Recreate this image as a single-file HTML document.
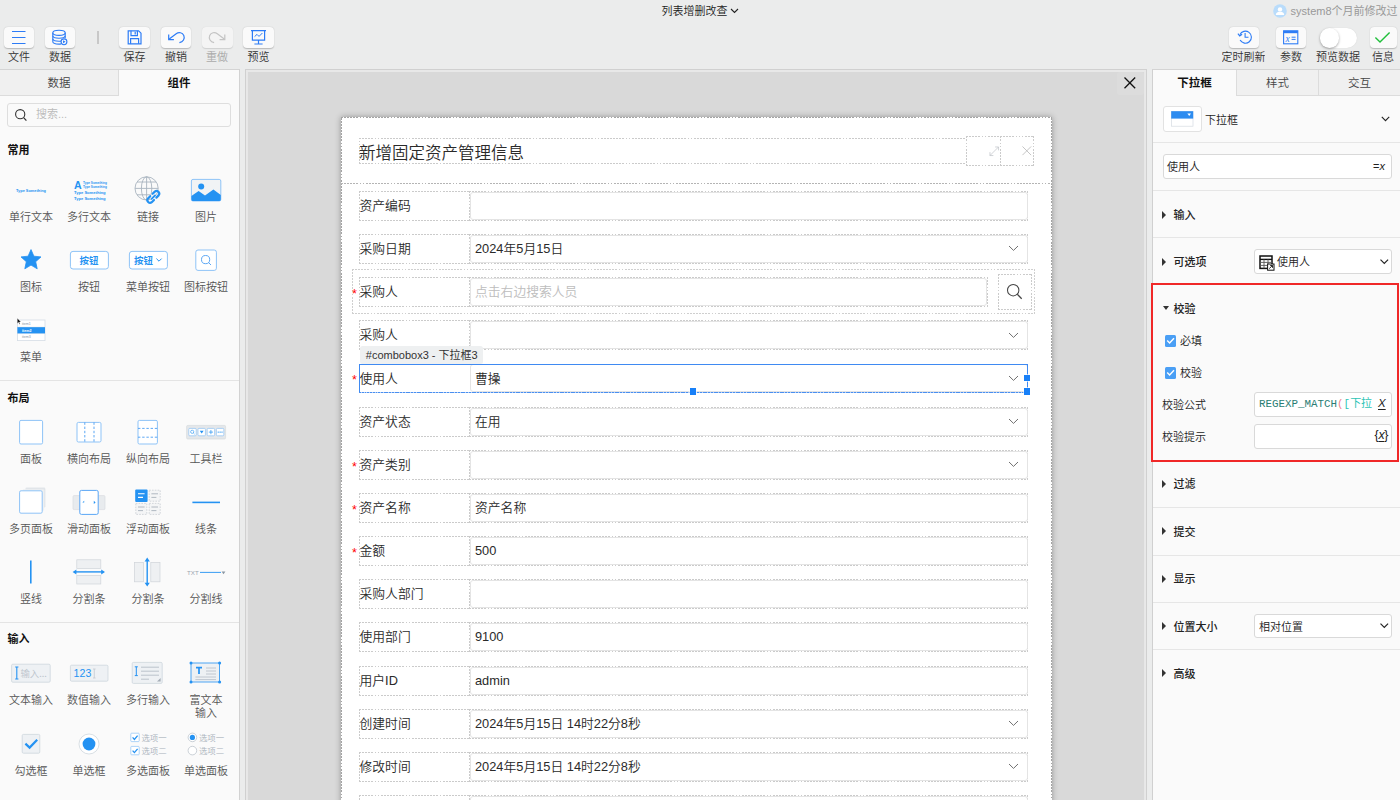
<!DOCTYPE html>
<html lang="zh-CN">
<head>
<meta charset="utf-8">
<title>列表增删改查</title>
<style>
*{box-sizing:border-box;margin:0;padding:0}
html,body{width:1400px;height:800px;overflow:hidden}
body{position:relative;background:#ebecec;font-family:"Liberation Sans","Noto Sans CJK SC",sans-serif;font-size:11px;color:#333;line-height:1;font-weight:350}
.abs{position:absolute}
svg{display:block;overflow:visible}
/* ---------- top bar ---------- */
#title{position:absolute;left:0;width:1400px;top:4px;height:14px;text-align:center;font-size:11px;line-height:14px;color:#222}
#title svg{display:inline-block;vertical-align:middle;margin-left:2px;margin-top:-2px}
.tb{position:absolute;top:26.6px;width:30.5px;height:21.6px;background:#fafafa;border-radius:4px;box-shadow:0 0.4px 1.2px rgba(0,0,0,.22)}
.tb svg{position:absolute;left:-0.5px;top:-1px}
.tl{position:absolute;top:50px;height:14px;line-height:14px;font-size:11px;color:#333;text-align:center;white-space:nowrap;width:60px;margin-left:-30px}
.tl.dis{color:#aaa}
#user{position:absolute;top:4px;left:1290.6px;font-size:11px;line-height:14px;color:#999;white-space:nowrap;font-weight:400}
/* ---------- left panel ---------- */
#left{position:absolute;left:0;top:69.2px;width:240px;height:731px;background:#fafafa;border-top:0.9px solid #d4d4d4;border-right:0.9px solid #d2d2d2}
.tab{position:absolute;top:0;height:26px;line-height:27px;text-align:center;font-size:11.5px;color:#444}
.tab.off{background:#f0f0f0;border-bottom:1px solid #dcdcdc;border-right:1px solid #dcdcdc}
.tab.on{font-weight:bold;color:#111}
#search{position:absolute;left:7px;top:33.2px;width:224px;height:23.6px;border:1.2px solid #dedede;border-radius:3px;background:#fafafa}
#search span{position:absolute;left:28px;top:0;line-height:21px;color:#bbb;font-size:11px}
.sec{position:absolute;left:7.4px;font-weight:bold;font-size:11px;color:#111;line-height:14px}
.hr{position:absolute;left:0;height:1px;background:#e4e4e4}
.it{position:absolute;width:58px;height:70px;margin-left:-29px}
.it svg{position:absolute;left:9px;top:0}
.it span{position:absolute;left:-6px;width:70px;top:41px;text-align:center;font-size:11px;line-height:13px;color:#555;white-space:nowrap}
/* ---------- canvas ---------- */
#cv{position:absolute;left:244.7px;top:69.2px;width:902.3px;height:735px;background:#d9d9d9;border:0.9px solid #d0d0d0;box-shadow:inset 0 0 0 1.9px #e8e8e8}
#dlg{position:absolute;left:340.7px;top:117.3px;width:711.6px;height:700px;background-color:#fff;box-shadow:0 0 6px rgba(0,0,0,.32);--dc:#a4a4a4}
.db,.lab,.fld{--dc:#cbcbcb}
.db,.lab,.fld,#dlg{background-image:repeating-linear-gradient(90deg,var(--dc) 0 1.8px,transparent 1.8px 3.1px),repeating-linear-gradient(90deg,var(--dc) 0 1.8px,transparent 1.8px 3.1px),repeating-linear-gradient(0deg,var(--dc) 0 1.8px,transparent 1.8px 3.1px),repeating-linear-gradient(0deg,var(--dc) 0 1.8px,transparent 1.8px 3.1px);background-size:100% 1px,100% 1px,1px 100%,1px 100%;background-position:0 0,0 100%,0 0,100% 0;background-repeat:no-repeat}
.db{position:absolute}
.lab{position:absolute;left:359px;width:111px;height:30px;font-size:12.8px;line-height:30px;color:#2a2a2a;white-space:nowrap;padding-left:0.5px}
.fld{position:absolute;left:469px;width:559px;height:30px;font-size:12.8px;line-height:30px;color:#2a2a2a;padding-left:6px;white-space:nowrap;background-color:#fff}
.fld::before{content:"";position:absolute;left:0.5px;top:1px;right:0.5px;bottom:1px;border:1px solid #e4e4e4;border-radius:3px}
.fld svg{position:absolute;right:9px;top:11.4px}
.req{position:absolute;left:352px;color:#f00;font-size:12.5px;line-height:12px;font-family:'Liberation Sans',sans-serif}
/* ---------- right panel ---------- */
#right{position:absolute;left:1152px;top:69.2px;width:248px;height:731px;background:#fafafa;border-top:0.9px solid #d4d4d4;border-left:0.9px solid #d0d0d0}
.rs{position:absolute;left:1173.6px;font-size:11px;line-height:14px;color:#222;font-weight:500;white-space:nowrap}
.rl{position:absolute;left:1162px;font-size:11px;line-height:14px;color:#222;white-space:nowrap}
.tri{position:absolute;left:1162.3px;width:0;height:0;border-left:4.6px solid #333;border-top:4.2px solid transparent;border-bottom:4.2px solid transparent}
.rin{position:absolute;left:1254px;width:138px;height:25px;border:1px solid #d9d9d9;border-radius:3px;background:#fff;font-size:11px;line-height:25.2px;color:#222;white-space:nowrap;overflow:hidden}
.rhr{position:absolute;left:1153px;width:247px;height:1px;background:#e6e6e6}
.cb{position:absolute;left:1164.7px;width:11.5px;height:11.5px;background:#4a9ff5;border-radius:1.5px}
</style>
</head>
<body>
<div id="title">列表增删改查<svg width="9" height="6" viewBox="0 0 9 6"><path d="M1 1 L4.5 4.5 L8 1" fill="none" stroke="#222" stroke-width="1.1"/></svg></div>
<div id="user">system8个月前修改过</div>
<svg class="abs" style="left:1273px;top:4px" width="14" height="14" viewBox="0 0 14 14"><circle cx="7" cy="7" r="6.8" fill="#b9dcfb"/><circle cx="7" cy="5.4" r="2.2" fill="#fff"/><path d="M2.8 11 Q3 7.8 7 7.8 Q11 7.8 11.2 11 Z" fill="#fff"/></svg>

<!-- left toolbar buttons -->
<div class="tb" style="left:3.5px"><svg width="31" height="23" viewBox="0 0 31 23"><path d="M9 5.5H22.5M9 11.5H22.5M9 17.5H22.5" stroke="#2d7cf6" stroke-width="1.2" fill="none"/></svg></div>
<div class="tl" style="left:19px">文件</div>
<div class="tb" style="left:44.5px"><svg width="31" height="23" viewBox="0 0 31 23"><g fill="none" stroke="#2d7cf6" stroke-width="1.1"><ellipse cx="15" cy="6.8" rx="6.2" ry="2.6"/><path d="M8.8 6.8V15.5C8.8 17 11.5 18.1 15 18.1 15.8 18.1 16.5 18 17.2 17.9M21.2 6.8V12.3"/><path d="M8.8 9.8C8.8 11.2 11.5 12.3 15 12.3 18.5 12.3 21.2 11.2 21.2 9.8M8.8 12.8C8.8 14.2 11.5 15.3 15 15.3 15.8 15.3 16.4 15.2 17 15.1"/><circle cx="20" cy="15.8" r="2.9" fill="#fafafa"/></g><path d="M19 14.3 L21.6 15.8 L19 17.3Z" fill="#2d7cf6"/></svg></div>
<div class="tl" style="left:60px">数据</div>
<div class="abs" style="left:97px;top:31px;width:1.5px;height:13px;background:#c8c8c8"></div>
<div class="tb" style="left:119px"><svg width="31" height="23" viewBox="0 0 31 23"><g fill="none" stroke="#2d7cf6" stroke-width="1.2"><path d="M9.2 4.8H19.6L22 7.2V17.8H9.2Z"/><path d="M12 4.8V9.6H18.4V4.8M16.2 5.8V8.4M11.6 17.8V12.6H19.6V17.8"/></g></svg></div>
<div class="tl" style="left:134.5px">保存</div>
<div class="tb" style="left:160.5px"><svg width="31" height="23" viewBox="0 0 31 23"><g fill="none" stroke="#2d7cf6" stroke-width="1.2"><path d="M8.9 13.3 L16.2 7.7 C18.8 5.8 22.4 6.5 23.8 9.5 C25.1 12.5 23.2 16 19.4 16.7"/><path d="M8.7 8.6 V13.6 H13.9"/></g></svg></div>
<div class="tl" style="left:176px">撤销</div>
<div class="tb" style="left:202px;background:#f4f4f4;box-shadow:0 0.5px 1px rgba(0,0,0,.12)"><svg width="31" height="23" viewBox="0 0 31 23"><g fill="none" stroke="#c4c4c4" stroke-width="1.2"><path d="M22.6 13.3 L15.3 7.7 C12.7 5.8 9.1 6.5 7.7 9.5 C6.4 12.5 8.3 16 12.1 16.7"/><path d="M22.8 8.6 V13.6 H17.6"/></g></svg></div>
<div class="tl dis" style="left:217px">重做</div>
<div class="tb" style="left:243px"><svg width="31" height="23" viewBox="0 0 31 23"><g fill="none" stroke="#2d7cf6" stroke-width="1.2"><path d="M8 4.6H23M9.4 4.6V14.2H21.6V4.6M15.5 14.2V17.6M11.4 18H19.6"/><path d="M11.6 10.6 L14 8.4 L16 10.4 L19.4 7" stroke-width="1"/></g></svg></div>
<div class="tl" style="left:258.5px">预览</div>

<!-- right toolbar buttons -->
<div class="tb" style="left:1228.5px"><svg width="31" height="23" viewBox="0 0 31 23"><g fill="none" stroke="#2d7cf6" stroke-width="1.1" transform="translate(1.5,-0.6)"><path d="M10.4 9.4A6 6 0 1 1 10.6 14.6"/><path d="M8.4 8.2 L10.2 10.6 L12.6 8.8"/><path d="M15.6 7.6V11.8H19"/></g></svg></div>
<div class="tl" style="left:1222.4px;width:43px;margin-left:0;overflow:hidden;display:flex;justify-content:flex-end">定时刷新</div>
<div class="tb" style="left:1275.5px"><svg width="31" height="23" viewBox="0 0 31 23"><rect x="8.6" y="4.8" width="14.2" height="13" fill="none" stroke="#2d7cf6" stroke-width="1.1"/><rect x="8.6" y="4.8" width="14.2" height="2.4" fill="#2d7cf6"/><text x="10.4" y="15.6" font-family="Liberation Serif,serif" font-style="italic" font-size="9.5" fill="#2d7cf6">x</text><path d="M16.6 11.2H20.6M16.6 13.4H20.6" stroke="#2d7cf6" stroke-width="1"/></svg></div>
<div class="tl" style="left:1291px">参数</div>
<div class="abs" style="left:1319.5px;top:28px;width:37.2px;height:19.5px;border-radius:10px;background:#fff;box-shadow:0 0 1px rgba(0,0,0,.15)"></div>
<div class="abs" style="left:1319.5px;top:28px;width:19.5px;height:19.5px;border-radius:10px;background:#fff;box-shadow:0 1px 2.5px rgba(0,0,0,.35)"></div>
<div class="tl" style="left:1338px">预览数据</div>
<div class="tb" style="left:1369.5px;width:27px"><svg width="27" height="23" viewBox="0 0 27 23"><path d="M6.4 11.6 L11 16 L20.6 6.4" fill="none" stroke="#1fbf3a" stroke-width="1.4"/></svg></div>
<div class="tl" style="left:1383px">信息</div>

<div id="left">
 <div class="tab off" style="left:0;width:119px">数据</div>
 <div class="tab on" style="left:119px;width:120px">组件</div>
 <div id="search"><svg class="abs" style="left:6px;top:4px" width="14" height="14" viewBox="0 0 14 14"><circle cx="6.2" cy="6.2" r="4.6" fill="none" stroke="#333" stroke-width="1.1"/><path d="M9.6 9.6 L12.4 12.6" stroke="#333" stroke-width="1.2"/></svg><span>搜索...</span></div>
</div>
<div class="sec" style="top:143px">常用</div>
<div class="hr" style="top:380px;width:239px"></div>
<div class="sec" style="top:391px">布局</div>
<div class="hr" style="top:621.8px;width:239px"></div>
<div class="sec" style="top:632px">输入</div>

<!-- ===== 常用 row1 (icon box top = 170, 40x40, centre y=190) ===== -->
<div class="it" style="left:31px;top:170px"><svg width="40" height="40" viewBox="0 0 40 40"><text x="20" y="21.5" text-anchor="middle" font-family="Liberation Sans,sans-serif" font-weight="bold" font-size="3.9" fill="#2492f2">Type Something</text></svg><span>单行文本</span></div>
<div class="it" style="left:89px;top:170px"><svg width="40" height="40" viewBox="0 0 40 40"><g font-family="Liberation Sans,sans-serif" font-weight="bold" fill="#2492f2"><text x="5" y="18.6" font-size="10.6">A</text><text x="14" y="13.5" font-size="3.1">Type Something</text><text x="14" y="17.8" font-size="3.1">Type Something</text><text x="5" y="24.2" font-size="4.1">Type Something</text><text x="5" y="30.4" font-size="4.1">Type Something</text></g></svg><span>多行文本</span></div>
<div class="it" style="left:148px;top:170px"><svg width="40" height="40" viewBox="0 0 40 40"><g fill="none" stroke="#a9b4bf" stroke-width="0.9"><circle cx="18.6" cy="18.4" r="11.6"/><ellipse cx="18.6" cy="18.4" rx="5.2" ry="11.6"/><path d="M18.6 6.8V30M7 18.4H30.2M9 12H28.2M9 24.8H22"/></g><g fill="none" stroke="#2492f2" stroke-width="2.2" stroke-linecap="round" transform="translate(-1.8,-0.4)"><path d="M26.4 24.2 L28.6 22 A2.7 2.7 0 0 1 32.4 25.8 L30.2 28"/><path d="M27.8 30.4 L25.6 32.6 A2.7 2.7 0 0 1 21.8 28.8 L24 26.6"/><path d="M25.4 29.2 L28.8 25.8" stroke-width="1.8"/></g></svg><span>链接</span></div>
<div class="it" style="left:206px;top:170px"><svg width="40" height="40" viewBox="0 0 40 40"><rect x="5.4" y="9.4" width="29.4" height="21.6" rx="1.6" fill="#f1f3f5" stroke="#8ec3f7" stroke-width="1"/><circle cx="15.2" cy="16.4" r="3" fill="#2492f2"/><path d="M5.4 26 L12.6 21 L19 25.4 L27.4 19.6 L34.8 25 V29.4 Q34.8 31 33.2 31 H7 Q5.4 31 5.4 29.4Z" fill="#2492f2"/></svg><span>图片</span></div>
<!-- ===== 常用 row2 (top 240) ===== -->
<div class="it" style="left:31px;top:240px"><svg width="40" height="40" viewBox="0 0 40 40"><path d="M20 9.6 L22.9 16.2 L30 16.9 L24.7 21.7 L26.2 28.8 L20 25.1 L13.8 28.8 L15.3 21.7 L10 16.9 L17.1 16.2Z" fill="#2492f2" stroke="#2492f2" stroke-width="0.8" stroke-linejoin="round"/></svg><span>图标</span></div>
<div class="it" style="left:89px;top:240px"><svg width="40" height="40" viewBox="0 0 40 40"><rect x="1.4" y="11.4" width="38" height="17.6" rx="2.6" fill="#fff" stroke="#8ec3f7" stroke-width="1"/><text x="20" y="23.6" text-anchor="middle" font-family="Noto Sans CJK SC,sans-serif" font-weight="bold" font-size="9.4" fill="#2492f2">按钮</text></svg><span>按钮</span></div>
<div class="it" style="left:148px;top:240px"><svg width="40" height="40" viewBox="0 0 40 40"><rect x="1.4" y="11.4" width="38" height="17.6" rx="2.6" fill="#fff" stroke="#8ec3f7" stroke-width="1"/><text x="15.4" y="23.6" text-anchor="middle" font-family="Noto Sans CJK SC,sans-serif" font-weight="bold" font-size="9.4" fill="#2492f2">按钮</text><path d="M28.4 18.6 L31 21.2 L33.6 18.6" fill="none" stroke="#2492f2" stroke-width="1"/></svg><span>菜单按钮</span></div>
<div class="it" style="left:206px;top:240px"><svg width="40" height="40" viewBox="0 0 40 40"><rect x="9.8" y="10" width="20.6" height="20.4" rx="2.2" fill="#fff" stroke="#8ec3f7" stroke-width="1"/><circle cx="19.6" cy="19.6" r="4.1" fill="none" stroke="#4a9df3" stroke-width="0.9"/><path d="M22.6 22.6 L25 25" stroke="#4a9df3" stroke-width="0.9"/></svg><span>图标按钮</span></div>
<!-- ===== 常用 row3 (top 310) ===== -->
<div class="it" style="left:31px;top:310px"><svg width="40" height="40" viewBox="0 0 40 40"><rect x="6.4" y="10" width="27.6" height="20.6" fill="#fff" stroke="#d5dde5" stroke-width="0.8"/><rect x="6.4" y="17" width="27.6" height="6.6" fill="#2492f2"/><path d="M6.4 17H34M6.4 23.6H34" stroke="#d5dde5" stroke-width="0.4"/><g font-family="Liberation Sans,sans-serif" font-size="3.6"><text x="11" y="14.8" fill="#8b97a3">item1</text><text x="11" y="21.6" fill="#fff" font-weight="bold">item2</text><text x="11" y="28.4" fill="#8b97a3">item3</text></g></svg><span>菜单</span></div>
<!-- mouse cursor -->
<svg class="abs" style="left:16.6px;top:317.6px" width="5" height="6.9" viewBox="0 0 8 11"><path d="M0.5 0.5 V8.6 L2.5 6.8 L3.9 10 L5 9.5 L3.7 6.4 L6.3 6.2Z" fill="#111" stroke="#fff" stroke-width="0.5"/></svg>
<!-- ===== 布局 row1 (top 412, centre 432) ===== -->
<div class="it" style="left:31px;top:412px"><svg width="40" height="40" viewBox="0 0 40 40"><rect x="8.6" y="8.4" width="23" height="23.6" rx="1.4" fill="#fff" stroke="#8ec3f7" stroke-width="1"/></svg><span>面板</span></div>
<div class="it" style="left:89px;top:412px"><svg width="40" height="40" viewBox="0 0 40 40"><rect x="8" y="10.4" width="24" height="19.6" rx="1.4" fill="#fff" stroke="#8ec3f7" stroke-width="1"/><path d="M15.8 10.4V30M25 10.4V30" stroke="#4a9df3" stroke-width="0.9" stroke-dasharray="2.4 1.8" fill="none"/></svg><span>横向布局</span></div>
<div class="it" style="left:148px;top:412px"><svg width="40" height="40" viewBox="0 0 40 40"><rect x="10" y="8.4" width="19.4" height="23.6" rx="1.4" fill="#fff" stroke="#8ec3f7" stroke-width="1"/><path d="M10 16.4H29.4M10 25.2H29.4" stroke="#4a9df3" stroke-width="0.9" stroke-dasharray="2.4 1.8" fill="none"/></svg><span>纵向布局</span></div>
<div class="it" style="left:206px;top:412px"><svg width="40" height="40" viewBox="0 0 40 40"><rect x="0.6" y="13.4" width="39" height="13.6" rx="1.2" fill="#e4e7ea" stroke="#d2d6da" stroke-width="0.6"/><g fill="#fff" stroke="#8ec3f7" stroke-width="0.7"><rect x="2.8" y="16.4" width="7.4" height="7.4" rx="1"/><rect x="12" y="16.4" width="7.4" height="7.4" rx="1"/><rect x="21.2" y="16.4" width="7.4" height="7.4" rx="1"/><rect x="30.4" y="16.4" width="7.4" height="7.4" rx="1"/></g><circle cx="6.2" cy="19.8" r="1.6" fill="none" stroke="#2492f2" stroke-width="0.6"/><path d="M7.4 21 L8.6 22.2" stroke="#2492f2" stroke-width="0.6"/><path d="M13.8 18.8H17.6L15.7 21.6Z" fill="#2492f2"/><path d="M22.8 20.1H27M24.9 18V22.2" stroke="#2492f2" stroke-width="0.7"/><g fill="#2492f2"><circle cx="32.2" cy="20.1" r="0.7"/><circle cx="34.1" cy="20.1" r="0.7"/><circle cx="36" cy="20.1" r="0.7"/></g></svg><span>工具栏</span></div>
<!-- ===== 布局 row2 (top 482) ===== -->
<div class="it" style="left:31px;top:482px"><svg width="40" height="40" viewBox="0 0 40 40"><rect x="14.4" y="5.6" width="20" height="20" rx="1.4" fill="#e1e5e9"/><rect x="11.6" y="7.2" width="21.6" height="21.6" rx="1.4" fill="#edf0f2"/><rect x="8.6" y="8.8" width="22.6" height="22.4" rx="1.4" fill="#fff" stroke="#8ec3f7" stroke-width="1"/></svg><span>多页面板</span></div>
<div class="it" style="left:89px;top:482px"><svg width="40" height="40" viewBox="0 0 40 40"><rect x="4" y="13.6" width="32" height="14" rx="1" fill="#e8ebee" stroke="#d5d9dd" stroke-width="0.6"/><rect x="10.8" y="8.4" width="18.4" height="24" rx="1.6" fill="#fff" stroke="#5aa6f5" stroke-width="1"/><path d="M15.2 20.4 L13.4 20.4 L15.2 18.8 V22Z M24.8 18.8 L26.6 20.4 L24.8 22Z" fill="#2492f2"/></svg><span>滑动面板</span></div>
<div class="it" style="left:148px;top:482px"><svg width="40" height="40" viewBox="0 0 40 40"><g fill="#f4f5f6" stroke="#b9c0c7" stroke-width="0.6" stroke-dasharray="1.6 1.2"><rect x="21.2" y="8.2" width="11" height="11"/><rect x="7.8" y="21.4" width="11" height="11"/><rect x="21.2" y="21.4" width="11" height="11"/></g><rect x="7.2" y="7.6" width="12.4" height="12.4" rx="1" fill="#2492f2"/><path d="M10 11.8H16.6M10 15.4H15" stroke="#fff" stroke-width="1.1"/><path d="M23.4 11.8H30M23.4 15.4H28.4M10 25H16.6M10 28.6H15M23.4 25H30M23.4 28.6H28.4" stroke="#a9b2bb" stroke-width="0.9"/></svg><span>浮动面板</span></div>
<div class="it" style="left:206px;top:482px"><svg width="40" height="40" viewBox="0 0 40 40"><path d="M6.4 20.4H34" stroke="#2492f2" stroke-width="1.6"/></svg><span>线条</span></div>
<!-- ===== 布局 row3 (top 552) ===== -->
<div class="it" style="left:31px;top:552px"><svg width="40" height="40" viewBox="0 0 40 40"><path d="M19.8 8.6V31.4" stroke="#2492f2" stroke-width="1.6"/></svg><span>竖线</span></div>
<div class="it" style="left:89px;top:552px"><svg width="40" height="40" viewBox="0 0 40 40"><rect x="7.8" y="7.8" width="24" height="8.6" fill="#eef0f2" stroke="#cfd4d9" stroke-width="0.7"/><rect x="7.8" y="23.4" width="24" height="8.6" fill="#eef0f2" stroke="#cfd4d9" stroke-width="0.7"/><path d="M5.4 19.9H34.2" stroke="#2492f2" stroke-width="1.4"/><path d="M3.6 19.9 L7.4 17.4 V22.4Z M36 19.9 L32.2 17.4 V22.4Z" fill="#2492f2"/></svg><span>分割条</span></div>
<div class="it" style="left:148px;top:552px"><svg width="40" height="40" viewBox="0 0 40 40"><rect x="6.4" y="10.4" width="9.2" height="19.4" fill="#eef0f2" stroke="#cfd4d9" stroke-width="0.7"/><rect x="22.8" y="10.4" width="9.2" height="19.4" fill="#eef0f2" stroke="#cfd4d9" stroke-width="0.7"/><path d="M19.2 7.6V32.6" stroke="#2492f2" stroke-width="1.4"/><path d="M19.2 5.6 L21.8 9.4 H16.6Z M19.2 34.6 L21.8 30.8 H16.6Z" fill="#2492f2"/></svg><span>分割条</span></div>
<div class="it" style="left:206px;top:552px"><svg width="40" height="40" viewBox="0 0 40 40"><text x="1" y="22.6" font-family="Liberation Sans,sans-serif" font-size="6.2" fill="#9aa5b0">TXT</text><path d="M14 20.4H35" stroke="#2492f2" stroke-width="0.9"/><path d="M35.6 19.4H39.4L37.5 22.2Z" fill="#8a96a2"/></svg><span>分割线</span></div>
<!-- ===== 输入 row1 (top 653, centre 673) ===== -->
<div class="it" style="left:31px;top:653px"><svg width="40" height="40" viewBox="0 0 40 40"><rect x="0.6" y="11.2" width="38.6" height="18" rx="1.2" fill="#eef1f4" stroke="#c9d2da" stroke-width="0.7"/><path d="M4.2 14H7.4M4.2 26H7.4M5.8 14V26" stroke="#2492f2" stroke-width="1.1"/><text x="9.4" y="24.4" font-family="Noto Sans CJK SC,sans-serif" font-size="9.4" fill="#bcc4cc">输入...</text></svg><span>文本输入</span></div>
<div class="it" style="left:89px;top:653px"><svg width="40" height="40" viewBox="0 0 40 40"><rect x="1.4" y="12.2" width="37.6" height="16" rx="1.2" fill="#eef1f4" stroke="#c9d2da" stroke-width="0.7"/><text x="4.6" y="24.4" font-family="Liberation Sans,sans-serif" font-size="10.6" fill="#2492f2">123</text><path d="M24 16H26.6M24 25H26.6M25.3 16V25" stroke="#c3cad2" stroke-width="0.8"/></svg><span>数值输入</span></div>
<div class="it" style="left:148px;top:653px"><svg width="40" height="40" viewBox="0 0 40 40"><rect x="4.2" y="9.4" width="30" height="21" rx="1.2" fill="#eef1f4" stroke="#c9d2da" stroke-width="0.7"/><path d="M6.8 13.8H9.8M6.8 22.6H9.8M8.3 13.8V22.6" stroke="#2492f2" stroke-width="1"/><path d="M13 14.2H31M13 18.2H31M13 22.2H31M13 26.2H21" stroke="#b4bdc6" stroke-width="0.9"/><path d="M32.6 25 V28.6 H29Z" fill="#a4adb6"/></svg><span>多行输入</span></div>
<div class="it" style="left:206px;top:653px"><svg width="40" height="40" viewBox="0 0 40 40"><rect x="5" y="10" width="28.6" height="19" fill="#eef1f4" stroke="#2492f2" stroke-width="0.8"/><path d="M10 14.6H16M13 14.6V21" stroke="#2492f2" stroke-width="1.7"/><path d="M20 15H30M20 18H30M20 21H30M9.4 24H30M9.4 26.6H30" stroke="#b4bdc6" stroke-width="0.8"/><g fill="#2492f2"><circle cx="5" cy="10" r="1.5"/><circle cx="33.6" cy="10" r="1.5"/><circle cx="5" cy="29" r="1.5"/><circle cx="33.6" cy="29" r="1.5"/></g></svg><span>富文本<br>输入</span></div>
<!-- ===== 输入 row2 (top 724, centre 744) ===== -->
<div class="it" style="left:31px;top:724px"><svg width="40" height="40" viewBox="0 0 40 40"><rect x="11.2" y="10.4" width="17.6" height="18.8" rx="1.2" fill="#eef1f4" stroke="#c9d2da" stroke-width="0.7"/><path d="M14.4 19.6 L18.6 23.6 L26.2 15.8" fill="none" stroke="#2492f2" stroke-width="2.2"/></svg><span>勾选框</span></div>
<div class="it" style="left:89px;top:724px"><svg width="40" height="40" viewBox="0 0 40 40"><circle cx="20" cy="20" r="10" fill="#fff" stroke="#c9d2da" stroke-width="0.7"/><circle cx="20" cy="20" r="6.4" fill="#2492f2"/></svg><span>单选框</span></div>
<div class="it" style="left:148px;top:724px"><svg width="40" height="40" viewBox="0 0 40 40"><g fill="#fff" stroke="#8ec3f7" stroke-width="0.7"><rect x="2.8" y="9.2" width="8.4" height="8.4" rx="0.8"/><rect x="2.8" y="22.4" width="8.4" height="8.4" rx="0.8"/></g><path d="M4.6 13.4 L6.4 15.4 L9.6 11.6M4.6 26.6 L6.4 28.6 L9.6 24.8" fill="none" stroke="#2492f2" stroke-width="1.3"/><g font-family="Noto Sans CJK SC,sans-serif" font-size="8.4" fill="#aab3bc"><text x="13.4" y="16.6">选项一</text><text x="13.4" y="29.8">选项二</text></g></svg><span>多选面板</span></div>
<div class="it" style="left:206px;top:724px"><svg width="40" height="40" viewBox="0 0 40 40"><g fill="#fff" stroke="#b4bdc6" stroke-width="0.7"><circle cx="6.4" cy="13.4" r="4.3"/><circle cx="6.4" cy="26.6" r="4.3"/></g><circle cx="6.4" cy="13.4" r="2.6" fill="#2492f2"/><g font-family="Noto Sans CJK SC,sans-serif" font-size="8.4" fill="#aab3bc"><text x="13" y="16.6">选项一</text><text x="13" y="29.8">选项二</text></g></svg><span>单选面板</span></div>

<div id="cv"></div>
<div class="abs" style="left:1117px;top:72.4px;width:27px;height:23px;border-radius:3px;background:#dcdcdc"></div>
<svg class="abs" style="left:1123.6px;top:76.9px" width="11.7" height="11.7" viewBox="0 0 11.7 11.7"><path d="M0.5 0.5 L11.2 11.2 M11.2 0.5 L0.5 11.2" stroke="#111" stroke-width="1.3"/></svg>
<div id="dlg"></div>
<div class="db" style="left:359px;top:138px;width:607px;height:25.7px;background-size:100% 1px,100% 1px,1px 100%,0 0"></div>
<div class="abs" style="left:359px;top:138.5px;font-size:16.5px;line-height:28px;color:#2a2a2a;white-space:nowrap">新增固定资产管理信息</div>
<div class="db" style="left:966.4px;top:136.3px;width:34.4px;height:30px"></div>
<div class="db" style="left:999.8px;top:136.3px;width:34.4px;height:30px"></div>
<svg class="abs" style="left:988.5px;top:146px" width="10.5" height="10.5" viewBox="0 0 11 11"><g fill="none" stroke="#c0c4c8" stroke-width="0.75"><path d="M1 10 L10 1M6.4 1H10V4.6M1 6.4V10H4.6"/></g></svg>
<svg class="abs" style="left:1021.8px;top:146.3px" width="9.6" height="9.6" viewBox="0 0 10 10"><path d="M0.5 0.5 L9.5 9.5M9.5 0.5 L0.5 9.5" stroke="#b8b8b8" stroke-width="0.85" fill="none"/></svg>
<div class="db" style="left:341px;top:183.3px;width:711px;height:1px;--dc:#b4b4b4"></div>
<div class="lab" style="top:190.65px">资产编码</div>
<div class="fld" style="top:190.65px"></div>
<div class="lab" style="top:233.82px">采购日期</div>
<div class="fld" style="top:233.82px">2024年5月15日<svg width="11" height="7" viewBox="0 0 11 7"><path d="M1 1 L5.5 5.4 L10 1" fill="none" stroke="#707070" stroke-width="1"/></svg></div>
<div class="db" style="left:351.8px;top:269.39px;width:683px;height:44.6px;--dc:#cfcfcf"></div>
<div class="lab" style="top:276.99px">采购人</div>
<div class="fld" style="top:276.99px;width:518.5px;color:#bdbdbd">点击右边搜索人员</div>
<div class="db" style="left:997.6px;top:273.69px;width:34.6px;height:36.4px"></div>
<svg class="abs" style="left:1006.2px;top:282.89px" width="17" height="17" viewBox="0 0 17 17"><circle cx="7.2" cy="7.2" r="5.7" fill="none" stroke="#444" stroke-width="1.05"/><path d="M11.3 11.3 L15.7 15.7" stroke="#444" stroke-width="1.25"/></svg>
<div class="req" style="top:287.99px">*</div>
<div class="lab" style="top:320.16px">采购人</div>
<div class="fld" style="top:320.16px"><svg width="11" height="7" viewBox="0 0 11 7"><path d="M1 1 L5.5 5.4 L10 1" fill="none" stroke="#707070" stroke-width="1"/></svg></div>
<div class="lab" style="top:363.33px;background-image:none;line-height:32px">使用人</div>
<div class="fld" style="top:363.33px;background-image:none;line-height:32px">曹操<svg width="11" height="7" viewBox="0 0 11 7"><path d="M1 1 L5.5 5.4 L10 1" fill="none" stroke="#707070" stroke-width="1"/></svg></div>
<div class="req" style="top:374.33px">*</div>
<div class="lab" style="top:406.5px">资产状态</div>
<div class="fld" style="top:406.5px">在用<svg width="11" height="7" viewBox="0 0 11 7"><path d="M1 1 L5.5 5.4 L10 1" fill="none" stroke="#707070" stroke-width="1"/></svg></div>
<div class="lab" style="top:449.67px">资产类别</div>
<div class="fld" style="top:449.67px"><svg width="11" height="7" viewBox="0 0 11 7"><path d="M1 1 L5.5 5.4 L10 1" fill="none" stroke="#707070" stroke-width="1"/></svg></div>
<div class="req" style="top:460.67px">*</div>
<div class="lab" style="top:492.84px">资产名称</div>
<div class="fld" style="top:492.84px">资产名称</div>
<div class="req" style="top:503.84px">*</div>
<div class="lab" style="top:536.01px">金额</div>
<div class="fld" style="top:536.01px">500</div>
<div class="req" style="top:547.01px">*</div>
<div class="lab" style="top:579.18px">采购人部门</div>
<div class="fld" style="top:579.18px"></div>
<div class="lab" style="top:622.35px">使用部门</div>
<div class="fld" style="top:622.35px">9100</div>
<div class="lab" style="top:665.52px">用户ID</div>
<div class="fld" style="top:665.52px">admin</div>
<div class="lab" style="top:708.69px">创建时间</div>
<div class="fld" style="top:708.69px">2024年5月15日 14时22分8秒<svg width="11" height="7" viewBox="0 0 11 7"><path d="M1 1 L5.5 5.4 L10 1" fill="none" stroke="#707070" stroke-width="1"/></svg></div>
<div class="lab" style="top:751.86px">修改时间</div>
<div class="fld" style="top:751.86px">2024年5月15日 14时22分8秒<svg width="11" height="7" viewBox="0 0 11 7"><path d="M1 1 L5.5 5.4 L10 1" fill="none" stroke="#707070" stroke-width="1"/></svg></div>
<div class="lab" style="top:795.03px"></div>
<div class="fld" style="top:795.03px"></div>
<div class="abs" style="left:359px;top:363.8px;width:668.8px;height:28.8px;border:1px solid #3f8af2;border-bottom:none"></div>
<div class="abs" style="left:359px;top:391.5px;width:668.8px;height:1px;background:repeating-linear-gradient(90deg,#4a8ff0 0 1.9px,#b4d0f8 1.9px 2.75px)"></div>
<div class="abs" style="left:360px;top:346.2px;height:18.3px;padding:0 5.8px;background:#eef0f1;border-radius:2.5px;font-size:11px;line-height:18.5px;color:#333;white-space:nowrap;font-weight:400">#combobox3 - 下拉框3</div>
<div class="abs" style="left:689.9px;top:388.3px;width:6.6px;height:6.6px;background:#1880f8;box-shadow:0 0 0 0.6px #fff"></div>
<div class="abs" style="left:1023.5px;top:374.8px;width:6.6px;height:6.6px;background:#1880f8;box-shadow:0 0 0 0.6px #fff"></div>
<div class="abs" style="left:1023.5px;top:388.3px;width:6.6px;height:6.6px;background:#1880f8;box-shadow:0 0 0 0.6px #fff"></div>

<div id="right">
 <div class="tab on" style="left:0;width:83px">下拉框</div>
 <div class="tab off" style="left:83px;width:83px;border-left:1px solid #dcdcdc">样式</div>
 <div class="tab off" style="left:166px;width:81px;border-right:none">交互</div>
</div>
<!-- component selector -->
<div class="abs" style="left:1163px;top:106px;width:39px;height:25.5px;border:1px solid #e2e2e2;border-radius:3px;background:#fff"></div>
<svg class="abs" style="left:1170.5px;top:111px" width="23" height="16" viewBox="0 0 23 16"><rect x="0.4" y="0.4" width="21.6" height="14.8" fill="#fff" stroke="#d5dbe1" stroke-width="0.7"/><rect x="0.2" y="0.2" width="22" height="7.4" fill="#2d8cf0"/><path d="M16.4 2.6H20L18.2 5Z" fill="#fff"/></svg>
<div class="rl" style="left:1205px;top:113px">下拉框</div>
<svg class="abs" style="left:1380.5px;top:116px" width="9" height="6" viewBox="0 0 9 6"><path d="M0.8 0.8 L4.5 4.6 L8.2 0.8" fill="none" stroke="#222" stroke-width="1.1"/></svg>
<div class="rhr" style="top:142px"></div>
<div class="rin" style="left:1163px;top:154.4px;width:229px;padding-left:3px">使用人</div>
<div class="abs" style="left:1373px;top:159px;font-size:11px;line-height:14px;color:#222;white-space:nowrap">=<i style="font-family:'Liberation Sans',sans-serif">x</i></div>
<div class="rhr" style="top:190px"></div>
<!-- sections -->
<div class="tri" style="top:210.5px"></div><div class="rs" style="top:208px">输入</div>
<div class="rhr" style="top:237px"></div>
<div class="tri" style="top:257.5px"></div><div class="rs" style="top:255px">可选项</div>
<div class="rin" style="top:248.7px;padding-left:22px">使用人</div>
<svg class="abs" style="left:1258.6px;top:254.6px" width="16" height="16" viewBox="0 0 16 16"><rect x="1" y="1" width="12" height="12.4" fill="#fff" stroke="#111" stroke-width="1.5"/><path d="M1 4.4H13" stroke="#111" stroke-width="1.4"/><path d="M5 4.4V13.4M9 4.4V9M1 7.4H13M1 10.4H8" stroke="#555" stroke-width="0.9" fill="none"/><rect x="8.6" y="9" width="6.4" height="6.2" fill="#fff" stroke="#111" stroke-width="1"/><path d="M10.2 13.6 L13.4 10.6M11.2 10.5H13.5V12.8" fill="none" stroke="#111" stroke-width="0.9"/></svg>
<svg class="abs" style="left:1380px;top:258.6px" width="8.6" height="5.4" viewBox="0 0 8.6 5.4"><path d="M0.5 0.6 L4.3 4.5 L8.1 0.6" fill="none" stroke="#222" stroke-width="1.15"/></svg>
<!-- red highlight -->
<div class="abs" style="left:1151.3px;top:283.3px;width:248.2px;height:178.6px;border:2px solid #f02828"></div>
<div class="abs" style="left:1162.5px;top:306px;width:0;height:0;border-top:4.2px solid #333;border-left:3.6px solid transparent;border-right:3.6px solid transparent"></div><div class="rs" style="top:302px">校验</div>
<div class="cb" style="top:335px"><svg width="11" height="11" viewBox="0 0 11 11"><path d="M2.2 5.6 L4.6 8 L9 3.2" fill="none" stroke="#fff" stroke-width="1.4"/></svg></div><div class="rl" style="left:1180px;top:333.5px">必填</div>
<div class="cb" style="top:367px"><svg width="11" height="11" viewBox="0 0 11 11"><path d="M2.2 5.6 L4.6 8 L9 3.2" fill="none" stroke="#fff" stroke-width="1.4"/></svg></div><div class="rl" style="left:1180px;top:365.5px">校验</div>
<div class="rl" style="top:398px">校验公式</div>
<div class="rin" style="top:391.7px;padding-left:4px;font-family:'Liberation Mono','Noto Sans CJK SC',monospace;font-size:10.85px;line-height:23.4px;color:#2a7d74;font-weight:400"><span>REGEXP_MATCH</span><span style="color:#f0808c">(</span><span style="color:#2ec4b6">[<span style="font-size:11px">下拉</span></span></div>
<div class="abs" style="left:1375px;top:393.5px;width:16px;height:22px;background:#fff;border-radius:0 3px 3px 0"></div>
<div class="abs" style="left:1378px;top:396px;font-size:11.5px;line-height:14px;font-style:italic;color:#222;text-decoration:underline;text-underline-offset:1.5px;font-family:'Liberation Sans',sans-serif">X</div>
<div class="rl" style="top:430px">校验提示</div>
<div class="rin" style="top:423.7px"></div>
<div class="abs" style="left:1374.6px;top:427.6px;font-size:12.4px;line-height:14px;color:#222;font-family:'Liberation Sans',sans-serif;letter-spacing:-0.3px;font-weight:400;white-space:nowrap">{<i style="text-decoration:underline;text-underline-offset:1.6px">x</i>}</div>
<div class="tri" style="top:479.5px"></div><div class="rs" style="top:477px">过滤</div>
<div class="rhr" style="top:507px"></div>
<div class="tri" style="top:527px"></div><div class="rs" style="top:524.5px">提交</div>
<div class="rhr" style="top:555px"></div>
<div class="tri" style="top:574.5px"></div><div class="rs" style="top:572px">显示</div>
<div class="rhr" style="top:602px"></div>
<div class="tri" style="top:622px"></div><div class="rs" style="top:620px">位置大小</div>
<div class="rin" style="top:614.2px;height:24px;line-height:25.2px;padding-left:4px">相对位置</div>
<svg class="abs" style="left:1380px;top:623.4px" width="8.6" height="5.4" viewBox="0 0 8.6 5.4"><path d="M0.5 0.6 L4.3 4.5 L8.1 0.6" fill="none" stroke="#222" stroke-width="1.15"/></svg>
<div class="rhr" style="top:648.6px"></div>
<div class="tri" style="top:669.4px"></div><div class="rs" style="top:666.5px">高级</div>

</body>
</html>
